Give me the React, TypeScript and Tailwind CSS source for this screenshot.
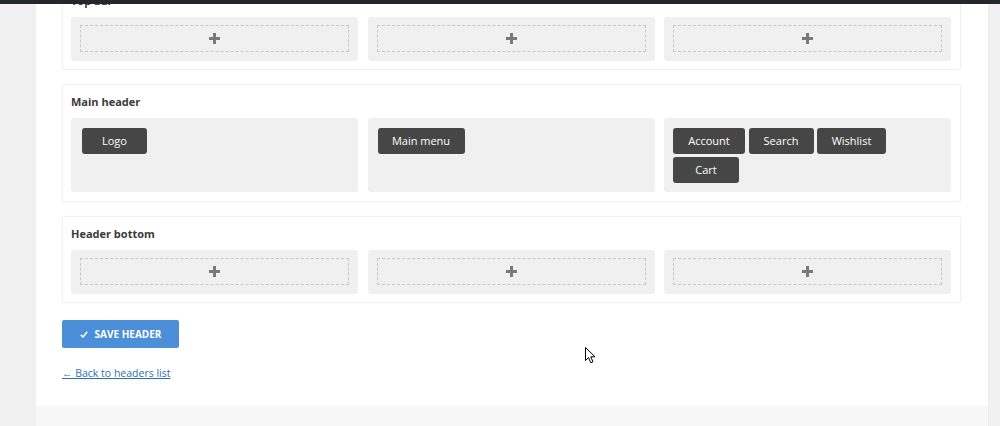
import React from "react";

const font = { fontFamily: '"Open Sans", "Noto Sans", Arial, sans-serif' };

function DashedSlot() {
  return (
    <div className="rounded-[3px] bg-[#f0f0f0] p-[9px] pt-[8px]">
      <div className="flex h-[27px] items-center justify-center border border-dashed border-[#c8c8c8]">
        <svg width="11" height="11" viewBox="0 0 11 11">
          <rect x="4" y="0" width="3" height="11" fill="#7a7a7a" />
          <rect x="0" y="4" width="11" height="3" fill="#7a7a7a" />
        </svg>
      </div>
    </div>
  );
}

function Btn({ label, w }: { label: string; w: string }) {
  return (
    <div className={`flex h-[26px] items-center justify-center rounded-[3px] bg-[#464646] text-[11px] text-white ${w}`}>
      {label}
    </div>
  );
}

function Card({ title, children, pb = "pb-[9px]" }: { title: string; children: React.ReactNode; pb?: string }) {
  return (
    <div className={`rounded-[3px] border border-[#f6eff0] bg-white pl-[8px] pr-[9px] pt-[9px] shadow-[0_0_2px_rgba(120,60,60,0.05)] ${pb}`}>
      <div className="mb-[8px] h-[16px] text-[11px] font-bold leading-[16px] text-[#3a3a3a]">{title}</div>
      {children}
    </div>
  );
}

export default function App() {
  return (
    <div className="relative flex h-[426px] w-[1000px] overflow-hidden bg-[#f1f1f1]" style={font}>
      <div className="w-[36px] shrink-0 bg-[#f0f0f1]" />
      <div className="flex w-[952px] shrink-0 flex-col bg-white">
        <div className="flex h-[406px] flex-col px-[26px]">
          <div className="-mt-[17px] flex w-[899px] flex-col gap-[14px]">
            <Card title="Top bar" pb="pb-[8px]">
              <div className="grid grid-cols-3 gap-[9.5px]">
                <DashedSlot />
                <DashedSlot />
                <DashedSlot />
              </div>
            </Card>
            <Card title="Main header">
              <div className="grid grid-cols-3 gap-[9.5px]">
                <div className="h-[74px] rounded-[3px] bg-[#f0f0f0] px-[11px] pt-[10px]">
                  <Btn label="Logo" w="w-[65px]" />
                </div>
                <div className="h-[74px] rounded-[3px] bg-[#f0f0f0] px-[10px] pt-[10px]">
                  <Btn label="Main menu" w="w-[87px]" />
                </div>
                <div className="h-[74px] rounded-[3px] bg-[#f0f0f0] px-[9px] pt-[10px]">
                  <div className="flex w-[220px] flex-wrap gap-x-[3.5px] gap-y-[3px]">
                    <Btn label="Account" w="w-[72px]" />
                    <Btn label="Search" w="w-[65px]" />
                    <Btn label="Wishlist" w="w-[69px]" />
                    <Btn label="Cart" w="w-[66px]" />
                  </div>
                </div>
              </div>
            </Card>
            <Card title="Header bottom" pb="pb-[8px]">
              <div className="grid grid-cols-3 gap-[9.5px]">
                <DashedSlot />
                <DashedSlot />
                <DashedSlot />
              </div>
            </Card>
          </div>
          <div className="mt-[17px] flex h-[28px] w-[117px] items-center justify-center gap-[7px] rounded-[2px] bg-[#4a8fd7] text-[10px] font-bold uppercase text-white">
            <svg width="8" height="7" viewBox="0 0 8 7">
              <path d="M0.8 3.8 L3 6 L7.2 0.8" stroke="#fff" strokeWidth="1.5" fill="none" />
            </svg>
            <span>Save header</span>
          </div>
          <a className="mt-[18px] w-max text-[10.5px] leading-[14px] text-[#2c6fb3] underline" href="#">
            ← Back to headers list
          </a>
        </div>
        <div className="flex-1 bg-[#f7f7f7]" />
      </div>
      <div className="flex-1 border-l border-[#ececec] bg-[#f1f1f1]" />
      <div className="absolute left-0 top-0 h-[4px] w-[1000px] bg-[#23282d]" />
      <svg className="absolute left-[585px] top-[347px]" width="12" height="18" viewBox="0 0 12 18">
        <path d="M0.5 0.5 L0.5 13.5 L3.5 10.5 L5.8 15.8 L8 14.8 L5.8 9.8 L10 9.8 Z" fill="#fff" stroke="#000" strokeWidth="1" strokeLinejoin="miter" />
      </svg>
    </div>
  );
}
